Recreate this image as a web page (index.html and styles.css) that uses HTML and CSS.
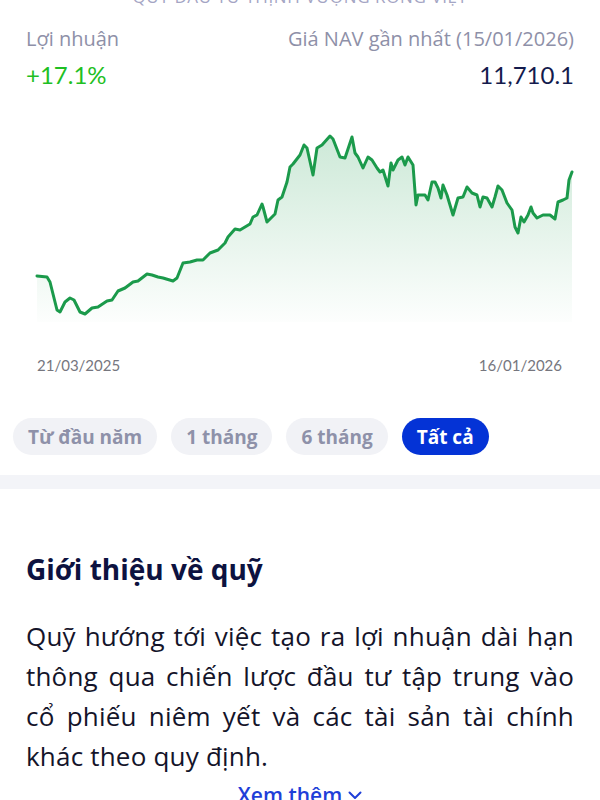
FILE: index.html
```html
<!DOCTYPE html>
<html lang="vi">
<head>
    <meta charset="UTF-8">
    <meta name="viewport" content="width=device-width, initial-scale=1.0">
    <title>Quỹ đầu tư Thịnh Vượng Rồng Việt</title>
    <link rel="stylesheet" href="styles.css">
</head>
<body>
    <!-- Fund header -->
    <div class="fund-name">QUỸ ĐẦU TƯ THỊNH VƯỢNG RỒNG VIỆT</div>

    <div class="stats">
        <div class="stats-row">
            <span class="stat-label">Lợi nhuận</span>
            <span class="stat-label">Giá NAV gần nhất (15/01/2026)</span>
        </div>
        <div class="stats-row values">
            <span class="profit">+17.1%</span>
            <span class="nav">11,710.1</span>
        </div>
    </div>

    <!-- NAV chart -->
    <svg class="chart" viewBox="0 90 600 240" preserveAspectRatio="none">
        <defs>
            <linearGradient id="areaFill" gradientUnits="userSpaceOnUse" x1="0" y1="135" x2="0" y2="322">
                <stop offset="0" stop-color="#1b9a4b" stop-opacity="0.22"/>
                <stop offset="1" stop-color="#1b9a4b" stop-opacity="0.01"/>
            </linearGradient>
        </defs>
        <polygon class="chart-area" points="37,276 37,322 572,322 572,172 569,180 567,198 563,200 558,202 555,219 550,215 543,215 537,218 533,213 531,207 528,215 524,222 521,217 518,233 515,227 512,210 507,203 502,190 498,186 495,197 492,207 487,198 483,197 480,207 477,195 472,193 467,187 463,197 458,198 453,215 450,205 447,195 443,185 441,198 438,188 435,182 432,182 428,200 425,195 418,195 416,205 413,165 408,157 405,165 402,157 398,160 393,170 391,163 388,186 383,170 380,172 377,168 372,160 368,157 363,168 358,157 355,153 352,137 345,158 340,157 333,139 330,136 322,145 317,148 313,175 307,148 304,145 300,155 293,164 290,167 287,182 282,197 278,200 275,214 272,217 267,222 263,207 262,204 257,215 253,217 250,224 240,230 235,229 228,237 225,243 218,250 210,253 203,260 197,260 190,262 183,263 177,278 173,281 163,278 158,277 152,275 147,274 138,281 133,282 125,288 118,291 112,300 107,301 98,307 92,308 85,314 80,312 74,300 70,298 65,302 60,312 57,310 50,282 47,277"/>
        <polyline class="chart-line" points="37,276 47,277 50,282 57,310 60,312 65,302 70,298 74,300 80,312 85,314 92,308 98,307 107,301 112,300 118,291 125,288 133,282 138,281 147,274 152,275 158,277 163,278 173,281 177,278 183,263 190,262 197,260 203,260 210,253 218,250 225,243 228,237 235,229 240,230 250,224 253,217 257,215 262,204 263,207 267,222 272,217 275,214 278,200 282,197 287,182 290,167 293,164 300,155 304,145 307,148 313,175 317,148 322,145 330,136 333,139 340,157 345,158 352,137 355,153 358,157 363,168 368,157 372,160 377,168 380,172 383,170 388,186 391,163 393,170 398,160 402,157 405,165 408,157 413,165 416,205 418,195 425,195 428,200 432,182 435,182 438,188 441,198 443,185 447,195 450,205 453,215 458,198 463,197 467,187 472,193 477,195 480,207 483,197 487,198 492,207 495,197 498,186 502,190 507,203 512,210 515,227 518,233 521,217 524,222 528,215 531,207 533,213 537,218 543,215 550,215 555,219 558,202 563,200 567,198 569,180 572,172"/>
    </svg>

    <div class="chart-dates">
        <span>21/03/2025</span>
        <span>16/01/2026</span>
    </div>

    <!-- Period filter -->
    <div class="periods">
        <button class="period">Từ đầu năm</button>
        <button class="period">1 tháng</button>
        <button class="period">6 tháng</button>
        <button class="period active">Tất cả</button>
    </div>

    <div class="divider"></div>

    <!-- About -->
    <section class="about">
        <h2 class="about-title">Giới thiệu về quỹ</h2>
        <p class="about-text">Quỹ hướng tới việc tạo ra lợi nhuận dài hạn thông qua chiến lược đầu tư tập trung vào cổ phiếu niêm yết và các tài sản tài chính khác theo quy định.</p>
        <a href="#" class="more-link">
            Xem thêm
            <svg width="14" height="9" viewBox="0 0 14 9"><path d="M1.5 1.5l5.5 5.5 5.5-5.5" fill="none" stroke="currentColor" stroke-width="2" stroke-linecap="round" stroke-linejoin="round"/></svg>
        </a>
    </section>
</body>
</html>
```

FILE: styles.css
```css
* {
    margin: 0;
    padding: 0;
    box-sizing: border-box;
}

html, body {
    width: 100%;
    height: 100%;
    overflow: hidden;
    background: #fff;
    font-family: 'Open Sans', 'Noto Sans', sans-serif;
}

/* Header */
.fund-name {
    margin-top: -13px;
    height: 20px;
    line-height: 20px;
    text-align: center;
    font-size: 17px;
    letter-spacing: 0.6px;
    color: #a4a5c4;
}

.stats {
    padding: 0 26px;
}

.stats-row {
    display: flex;
    justify-content: space-between;
    align-items: center;
    margin-top: 19px;
    height: 24px;
}

.stat-label {
    font-size: 20px;
    color: #8e90a8;
}

.stats-row.values {
    margin-top: 8px;
    height: 32px;
    font-family: Lato, 'Open Sans', sans-serif;
}

.profit {
    font-size: 24px;
    color: #1fbf23;
}

.nav {
    font-size: 24px;
    color: #141b4d;
}

/* Chart */
.chart {
    display: block;
    width: 600px;
    height: 240px;
}

.chart-area {
    fill: url(#areaFill);
}

.chart-line {
    fill: none;
    stroke: #1b9a4b;
    stroke-width: 3;
    stroke-linejoin: round;
    stroke-linecap: round;
}

.chart-dates {
    display: flex;
    justify-content: space-between;
    margin-top: 25px;
    padding: 0 38px 0 37px;
    font-family: Lato, 'Open Sans', sans-serif;
    font-size: 15px;
    line-height: 20px;
    color: #76767e;
}

/* Period filter */
.periods {
    display: flex;
    gap: 14px;
    margin-top: 43px;
    padding: 0 13px;
}

.period {
    height: 37px;
    padding: 0 15px;
    border: none;
    border-radius: 19px;
    background: #f1f2f6;
    color: #8e91a9;
    font-family: 'Open Sans', 'Noto Sans', sans-serif;
    font-size: 19px;
    font-weight: bold;
}

.period.active {
    background: #0433d6;
    color: #fff;
}

.divider {
    margin-top: 20px;
    height: 14px;
    background: #f3f4f8;
}

/* About */
.about {
    padding: 64px 26px 0;
}

.about-title {
    font-size: 28px;
    font-weight: bold;
    line-height: 32px;
    color: #0d1240;
}

.about-text {
    margin-top: 31px;
    font-size: 26px;
    line-height: 40px;
    letter-spacing: 0.2px;
    text-align: justify;
    color: #14142a;
}

.more-link {
    display: flex;
    justify-content: center;
    align-items: center;
    gap: 6px;
    margin-top: 6px;
    height: 26px;
    font-size: 21px;
    font-weight: 600;
    color: #1f3fd8;
    text-decoration: none;
}
```
